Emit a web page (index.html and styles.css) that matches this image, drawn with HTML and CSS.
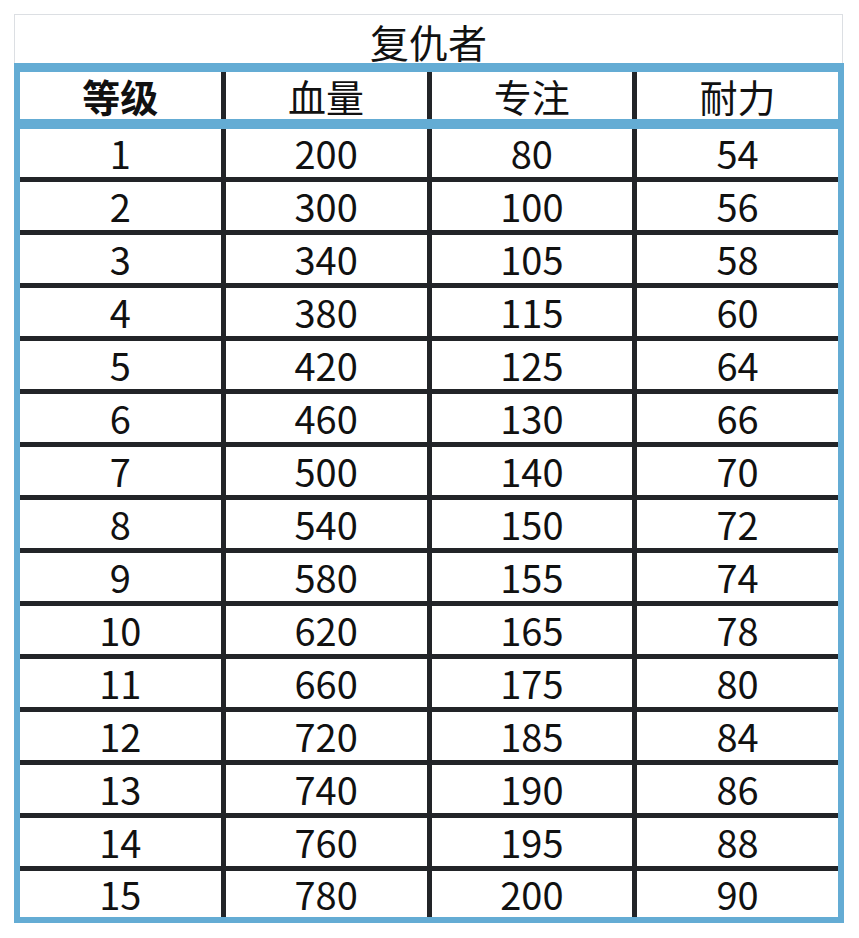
FILE: index.html
```html
<!DOCTYPE html>
<html lang="zh-CN">
<head>
<meta charset="utf-8">
<title>复仇者</title>
<link rel="stylesheet" href="styles.css">
</head>
<body>
<div class="sheet">
  <div class="title">复仇者</div>
  <div class="grid">
    <div class="head">
      <div class="cell bold">等级</div>
      <div class="cell">血量</div>
      <div class="cell">专注</div>
      <div class="cell">耐力</div>
    </div>
    <div class="body">
      <div class="cell">1</div><div class="cell">200</div><div class="cell">80</div><div class="cell">54</div>
      <div class="cell">2</div><div class="cell">300</div><div class="cell">100</div><div class="cell">56</div>
      <div class="cell">3</div><div class="cell">340</div><div class="cell">105</div><div class="cell">58</div>
      <div class="cell">4</div><div class="cell">380</div><div class="cell">115</div><div class="cell">60</div>
      <div class="cell">5</div><div class="cell">420</div><div class="cell">125</div><div class="cell">64</div>
      <div class="cell">6</div><div class="cell">460</div><div class="cell">130</div><div class="cell">66</div>
      <div class="cell">7</div><div class="cell">500</div><div class="cell">140</div><div class="cell">70</div>
      <div class="cell">8</div><div class="cell">540</div><div class="cell">150</div><div class="cell">72</div>
      <div class="cell">9</div><div class="cell">580</div><div class="cell">155</div><div class="cell">74</div>
      <div class="cell">10</div><div class="cell">620</div><div class="cell">165</div><div class="cell">78</div>
      <div class="cell">11</div><div class="cell">660</div><div class="cell">175</div><div class="cell">80</div>
      <div class="cell">12</div><div class="cell">720</div><div class="cell">185</div><div class="cell">84</div>
      <div class="cell">13</div><div class="cell">740</div><div class="cell">190</div><div class="cell">86</div>
      <div class="cell">14</div><div class="cell">760</div><div class="cell">195</div><div class="cell">88</div>
      <div class="cell">15</div><div class="cell">780</div><div class="cell">200</div><div class="cell">90</div>
    </div>
  </div>
</div>
</body>
</html>
```
FILE: styles.css
```css
html, body {
  margin: 0;
  padding: 0;
  background: #ffffff;
}
body {
  padding: 14px 0 0 14px;
  font-family: "Noto Sans CJK SC", sans-serif;
  color: #111111;
}
.sheet {
  width: 830px;
}
.title {
  box-sizing: border-box;
  width: 829px;
  height: 49px;
  border: 1px solid #dcdfe3;
  border-bottom: none;
  font-size: 39px;
  line-height: 48px;
  text-align: center;
  padding-top: 2px;
}
.grid {
  box-sizing: border-box;
  width: 830px;
  border-style: solid;
  border-color: #64acd4;
  border-width: 9px 6px 6px 6px;
}
.head {
  display: grid;
  grid-template-columns: repeat(4, 1fr);
  grid-template-rows: 47px;
  column-gap: 5px;
  background: #222428;
  border-bottom: 10px solid #64acd4;
}
.body {
  display: grid;
  grid-template-columns: repeat(4, 1fr);
  grid-template-rows: repeat(14, 48px) 46px;
  column-gap: 5px;
  row-gap: 5px;
  background: #222428;
}
.cell {
  background: #ffffff;
  display: flex;
  align-items: center;
  justify-content: center;
  font-size: 38px;
  line-height: 1;
}
.head .bold {
  font-weight: 700;
}
```
